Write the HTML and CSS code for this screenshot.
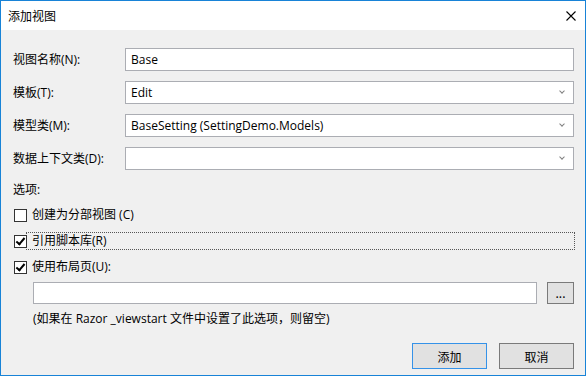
FILE: index.html
```html
<!DOCTYPE html>
<html lang="zh-CN">
<head>
  <meta charset="UTF-8" />
  <title>添加视图</title>
  <link rel="stylesheet" href="styles.css">
</head>
<body>

  <div class="window">
    <div class="titlebar">
      <span class="title">添加视图</span>
      <svg class="close" width="10" height="10" viewBox="0 0 10 10">
        <path d="M0.5 0.5 L9.5 9.5 M9.5 0.5 L0.5 9.5" stroke="#000" stroke-width="1.1" fill="none"/>
      </svg>
    </div>

    <div class="content">
      <div class="fields">
        <label>视图名称(N):</label>
        <div class="field">Base</div>

        <label>模板(T):</label>
        <div class="field combo">Edit<span class="arrow"></span></div>

        <label>模型类(M):</label>
        <div class="field combo">BaseSetting (SettingDemo.Models)<span class="arrow"></span></div>

        <label>数据上下文类(D):</label>
        <div class="field combo"><span class="arrow"></span></div>
      </div>

      <div class="section">选项:</div>

      <div class="check first">
        <span class="box"></span>
        <span class="check-text">创建为分部视图 (C)</span>
      </div>
      <div class="check">
        <span class="box checked"></span>
        <span class="check-text focused">引用脚本库(R)</span>
      </div>
      <div class="check">
        <span class="box checked"></span>
        <span class="check-text">使用布局页(U):</span>
      </div>

      <div class="layout-row">
        <div class="field layout-input"></div>
        <button class="btn browse">...</button>
      </div>
      <p class="hint">(如果在 Razor _viewstart 文件中设置了此选项，则留空)</p>

      <div class="actions">
        <button class="btn primary">添加</button>
        <button class="btn">取消</button>
      </div>
    </div>
  </div>

</body>
</html>
```

FILE: styles.css
```css
body {
  margin: 0;
  font-family: "Open Sans", "Noto Sans CJK SC", sans-serif;
  font-size: 12px;
  color: #000;
}
.window {
  width: 586px;
  height: 376px;
  box-sizing: border-box;
  border: 1px solid #1883d7;
  background-color: #f0f0f0;
  display: flex;
  flex-direction: column;
  overflow: hidden;
}
.titlebar {
  height: 29px;
  flex-shrink: 0;
  background-color: white;
  display: flex;
  justify-content: space-between;
  align-items: center;
  padding: 0 9px 0 7px;
}
.title {
  font-family: "Noto Sans CJK SC", sans-serif;
  font-size: 12px;
}
.content {
  padding: 18px 11px 0 12px;
  display: flex;
  flex-direction: column;
}
.fields {
  display: grid;
  grid-template-columns: 112px 1fr;
  row-gap: 10px;
  align-items: center;
}
.fields label {
  line-height: 16px;
}
.field {
  height: 23px;
  box-sizing: border-box;
  border: 1px solid #abadb3;
  background-color: white;
  padding: 0 5px;
  line-height: 21px;
  position: relative;
}
.arrow {
  position: absolute;
  right: 9px;
  top: 7px;
  width: 3px;
  height: 3px;
  border-right: 1px solid #808080;
  border-bottom: 1px solid #808080;
  transform: rotate(45deg);
}
.section {
  margin-top: 12px;
  line-height: 16px;
}
.check {
  display: flex;
  align-items: center;
  height: 16px;
  margin-top: 10px;
}
.check.first {
  margin-top: 9px;
}
.box {
  width: 13px;
  height: 13px;
  flex-shrink: 0;
  box-sizing: border-box;
  border: 1px solid #333;
  background-color: white;
  margin-left: 1px;
  position: relative;
}
.box.checked::after {
  content: "";
  position: absolute;
  left: 3px;
  top: 0px;
  width: 3px;
  height: 7px;
  border-right: 2px solid #000;
  border-bottom: 2px solid #000;
  transform: rotate(40deg);
}
.check-text {
  flex: 1;
  padding-left: 5px;
  line-height: 16px;
}
.check-text.focused {
  outline: 1px dotted #555;
}
.layout-row {
  display: flex;
  gap: 10px;
  margin: 7px 0 0 20px;
}
.layout-input {
  flex: 1;
  height: 22px;
}
.btn {
  font-family: "Noto Sans CJK SC", sans-serif;
  font-size: 12px;
  background-color: #e1e1e1;
  border: 1px solid #7a7a7a;
  color: #000;
  padding: 0;
}
.browse {
  width: 27px;
  height: 22px;
  line-height: 16px;
}
.hint {
  margin: 7px 0 0 20px;
  line-height: 16px;
}
.actions {
  display: flex;
  justify-content: flex-end;
  gap: 12px;
  margin-top: 16px;
}
.actions .btn {
  width: 75px;
  height: 26px;
}
.btn.primary {
  border-color: #3592e8;
}
```
